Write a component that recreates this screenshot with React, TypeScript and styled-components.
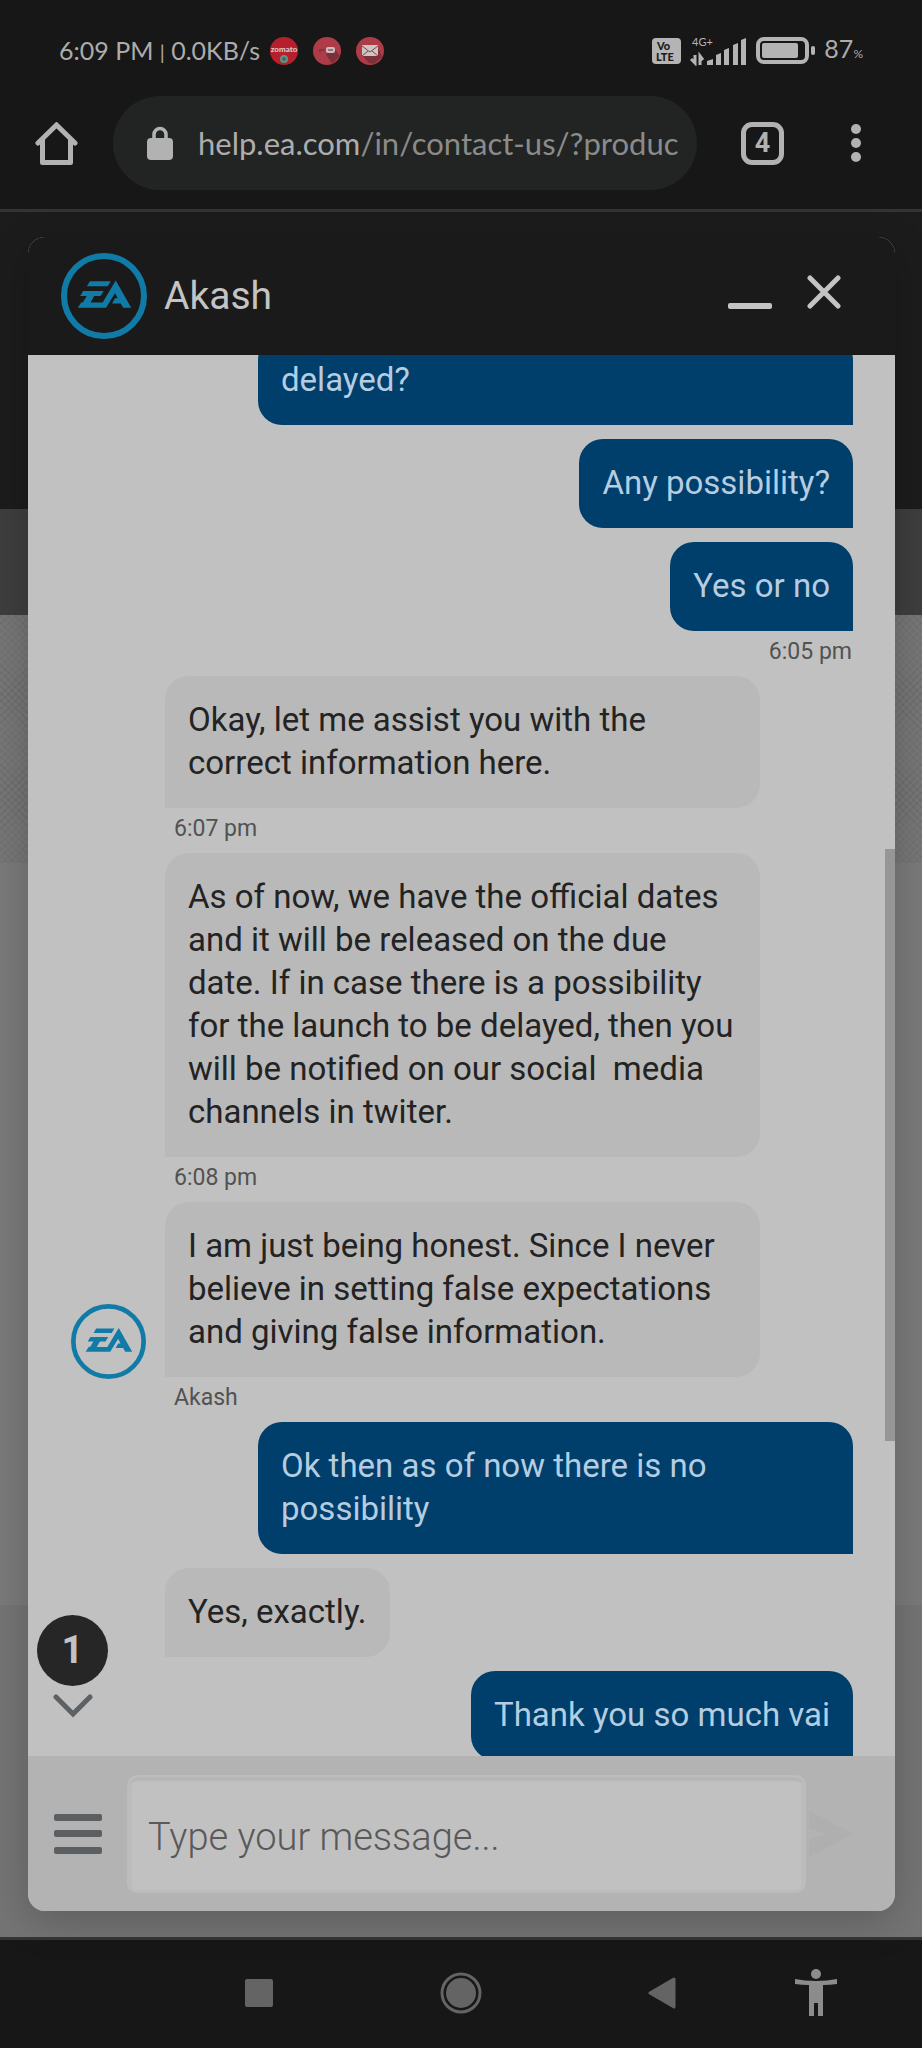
import React from 'react';
import styled, { createGlobalStyle } from 'styled-components';

const GlobalStyle = createGlobalStyle`
  *, *::before, *::after { box-sizing: border-box; }
  body { margin: 0; background: #171717; font-family: Roboto, "Liberation Sans", sans-serif; }
  button { display: flex; align-items: center; justify-content: center; margin: 0; padding: 0; border: 0; background: none; color: inherit; font: inherit; cursor: pointer; }
  svg { display: block; flex: none; }
`;

const Screen = styled.div`
  display: flex;
  flex-direction: column;
  height: 100vh;
  overflow: hidden;
`;

/* ---------- phone status bar ---------- */

const StatusBar = styled.header`
  display: flex;
  align-items: center;
  justify-content: space-between;
  height: 96px;
  padding: 5px 59px 0 59px;
  color: #acacac;
  font-family: Lato, sans-serif;
  font-size: 25px;
  line-height: 32px;
`;

const StatusGroup = styled.div<{ $gap: number }>`
  display: flex;
  align-items: center;
  gap: ${(p) => p.$gap}px;
  white-space: nowrap;
`;

const Clock = styled.span`
  width: 196px;
`;

const Separator = styled.span`
  font-size: 20px;
`;

const Percent = styled.small`
  font-size: 12px;
`;

/* ---------- browser bar ---------- */

const BrowserBar = styled.nav`
  display: flex;
  align-items: center;
  height: 116px;
  padding: 0 46px 19px 35px;
  border-bottom: 3px solid #343434;
  color: #b2b2b2;
`;

const AddressBar = styled.div`
  display: flex;
  flex: 1;
  align-items: center;
  gap: 25px;
  min-width: 0;
  height: 94px;
  margin: 0 44px 0 35px;
  padding: 0 19px 0 34px;
  border-radius: 47px;
  background: #222423;
`;

const Address = styled.span`
  flex: 1;
  overflow: hidden;
  color: #8b8b8b;
  font-family: Lato, sans-serif;
  font-size: 31px;
  line-height: 40px;
  white-space: nowrap;
`;

const Host = styled.span`
  color: #adadad;
`;

const TabCount = styled.button`
  && {
    width: 43px;
    height: 43px;
    margin-right: 52px;
    border: 5px solid #b2b2b2;
    border-radius: 11px;
    font-size: 27px;
    font-weight: 700;
    line-height: 30px;
  }
`;

const MenuButton = styled.button`
  width: 40px;
  height: 44px;
`;

/* ---------- page behind the chat ---------- */

const Page = styled.main`
  display: grid;
  flex: 1;
  grid-template: minmax(0, 1fr) / minmax(0, 1fr);
  min-height: 0;
`;

const Backdrop = styled.div`
  display: flex;
  flex-direction: column;
  grid-area: 1 / 1;
  min-height: 0;
  overflow: hidden;
`;

const Band = styled.div<{ $height?: number; $color: string; $woven?: boolean }>`
  flex: ${(p) => (p.$height ? `0 0 ${p.$height}px` : '1 0 0')};
  background-color: ${(p) => p.$color};
  ${(p) =>
    p.$woven &&
    `background-image:
      repeating-linear-gradient(45deg, rgba(0,0,0,.06) 0 1px, transparent 1px 5px),
      repeating-linear-gradient(-45deg, rgba(0,0,0,.06) 0 1px, transparent 1px 5px);`}
`;

/* ---------- chat panel ---------- */

const ChatPanel = styled.section`
  display: flex;
  flex-direction: column;
  grid-area: 1 / 1;
  min-height: 0;
  margin: 25px 27px 26px 28px;
  overflow: hidden;
  border-radius: 17px;
  background: #c1c1c1;
  box-shadow: 0 10px 40px rgba(0, 0, 0, 0.2);
`;

const ChatHeader = styled.header`
  display: flex;
  flex: none;
  align-items: center;
  height: 118px;
  padding: 0 44px 0 33px;
  background: #1a1a1a;
  color: #c4c4c4;
`;

const AgentName = styled.h1`
  flex: 1;
  margin: 0 0 0 17px;
  font-size: 39px;
  font-weight: 400;
  line-height: 48px;
`;

const HeaderButton = styled.button`
  && {
    width: 54px;
    height: 54px;
    margin: 0 0 8px 20px;
  }
`;

const ChatBody = styled.div`
  position: relative;
  flex: 1;
  min-height: 0;
  overflow: hidden;
`;

const MessageList = styled.ol`
  display: flex;
  flex-direction: column;
  gap: 14px;
  margin: -19px 0 0;
  padding: 0 42px 0 43px;
  list-style: none;
`;

const MessageRow = styled.li`
  display: grid;
  grid-template-columns: 75px minmax(0, 1fr);
  gap: 19px;
`;

const Stack = styled.div<{ $mine?: boolean }>`
  display: flex;
  flex-direction: column;
  grid-column: 2;
  align-items: ${(p) => (p.$mine ? 'flex-end' : 'flex-start')};
`;

const Bubble = styled.p<{ $mine?: boolean; $full?: boolean }>`
  width: ${(p) => (p.$full ? '100%' : 'auto')};
  max-width: calc(100% - 93px);
  margin: 0;
  padding: 22px 23px 24px;
  border-radius: ${(p) => (p.$mine ? '24px 24px 0 24px' : '24px 24px 24px 0')};
  background: ${(p) => (p.$mine ? '#003e6c' : '#b9b9b9')};
  color: ${(p) => (p.$mine ? '#b5cde0' : '#232323')};
  font-size: 33px;
  line-height: 43px;
  white-space: pre-wrap;
`;

const Meta = styled.span<{ $mine?: boolean }>`
  padding: 10px ${(p) => (p.$mine ? 1 : 0)}px 0 ${(p) => (p.$mine ? 0 : 9)}px;
  color: #525252;
  font-size: 23px;
  line-height: 21px;
`;

const AvatarSlot = styled.div`
  grid-row: 1;
  grid-column: 1;
  align-self: end;
  margin-bottom: 29px;
`;

const ScrollThumb = styled.div`
  position: absolute;
  top: calc(35% + 4px);
  right: 0;
  width: 10px;
  height: calc(42% + 3px);
  background: #969696;
`;

const JumpButton = styled.button`
  position: absolute;
  bottom: 38px;
  left: 9px;
  flex-direction: column;
  gap: 8px;
  color: #5e6163;
`;

const UnreadBadge = styled.span`
  width: 71px;
  height: 71px;
  border-radius: 50%;
  background: #262626;
  color: #c3c3c3;
  font-size: 38px;
  font-weight: 700;
  line-height: 70px;
`;

/* ---------- composer ---------- */

const Composer = styled.form`
  display: flex;
  flex: none;
  align-items: center;
  height: 155px;
  padding: 0 42px 0 26px;
  background: #b3b3b3;
  color: #5b5f62;
`;

const MessageInput = styled.input`
  flex: 1;
  min-width: 0;
  height: 118px;
  margin: 0 3px 0 25px;
  padding: 6px 18px 0;
  border: 3px solid #bcbcbc;
  border-radius: 10px;
  outline: none;
  background: #c1c1c1;
  box-shadow: inset 0 2px 3px rgba(0, 0, 0, 0.09);
  color: #232323;
  font: 300 38px/48px Roboto, sans-serif;

  &::placeholder {
    color: #595959;
    opacity: 1;
  }
`;

/* ---------- phone navigation ---------- */

const SystemNav = styled.nav`
  display: grid;
  flex: none;
  grid-template-columns: 158fr 202fr 202fr 200fr 108fr 52fr;
  align-items: center;
  height: 111px;
  padding-bottom: 2px;
  border-top: 3px solid #343434;
  color: #646464;

  button:first-child { grid-column: 2; }
  button:last-child { color: #8c8c8c; }
`;

function EaLogo({ size, stroke }: { size: number; stroke: number }) {
  return (
    <svg width={size} height={size} viewBox="0 0 256 256" role="img" aria-label="EA">
      <circle cx="128" cy="128" r={128 - stroke / 2} fill="none" stroke="#117ba8" strokeWidth={stroke} />
      <g fill="#117ba8">
        <path d="M86 84h62l-9 15H77z" />
        <path d="M66 113h61l-9 15H57z" />
        <path d="M79 124h22l-13 23h36L163 82l46 81h-24l-7-13h-26l9-15h8l-8-16-27 44H50l10-16h5z" />
      </g>
    </svg>
  );
}

function StatusBadges() {
  return (
    <>
      <svg width="28" height="28" viewBox="0 0 28 28">
        <circle cx="14" cy="14" r="14" fill="#b5202c" />
        <text x="14" y="15" textAnchor="middle" fontSize="8" fontWeight="900" fill="#dcc9c9" fontFamily="Lato">zomato</text>
        <circle cx="14" cy="22" r="4" fill="#5f9186" />
        <path d="M12 22h4M14 20v4" stroke="#37544f" />
      </svg>
      <svg width="28" height="28" viewBox="0 0 28 28">
        <circle cx="14" cy="14" r="14" fill="#ae3b48" />
        <path d="M13 17l8-6 6 8-8 8z" fill="#7c3039" />
        <rect x="13" y="10" width="9" height="6" rx="2" fill="#cdbabc" />
        <path d="M15 13h5M8 13h4M7 12v3" stroke="#642c33" strokeWidth="1" />
      </svg>
      <svg width="28" height="28" viewBox="0 0 28 28">
        <circle cx="14" cy="14" r="14" fill="#ae3b48" />
        <path d="M7 19h14l1-8 4 9-8 7-5-1z" fill="#7c3039" />
        <rect x="6" y="8" width="16" height="11" fill="#cfc3c3" />
        <path d="M6 9l8 6 8-6M6 19l6-5M22 19l-6-5" fill="none" stroke="#76474c" strokeWidth="1" />
      </svg>
    </>
  );
}

function VolteIcon() {
  return (
    <svg width="29" height="26" viewBox="0 0 29 26">
      <rect width="29" height="26" rx="4" fill="#b4b4b4" />
      <g fill="#1b1b1b" fontFamily="Lato" fontWeight="900">
        <text x="5" y="12" fontSize="11">Vo</text>
        <text x="4" y="23" fontSize="11">LTE</text>
      </g>
    </svg>
  );
}

function SignalIcon() {
  return (
    <svg width="57" height="30" viewBox="0 0 57 30" fill="#b4b4b4">
      <text x="2" y="10" fontSize="11" fontFamily="Lato">4G+</text>
      <path d="M17 29v-4l6-2v6zM26 29V19l5-2v12zM34 29V14l5-2v17zM43 29V9l5-2v22zM51 29V4l5-2v27z" />
      <path d="M5 19v8l-4-4M10 29v-9l3 4" fill="none" stroke="#b4b4b4" strokeWidth="3" />
    </svg>
  );
}

function BatteryIcon() {
  return (
    <svg width="59" height="27" viewBox="0 0 59 27">
      <rect x="2" y="2" width="49" height="23" rx="6" fill="none" stroke="#b4b4b4" strokeWidth="4" />
      <rect x="6" y="6" width="36" height="15" rx="2" fill="#b4b4b4" />
      <rect x="55" y="9" width="4" height="9" rx="2" fill="#b4b4b4" />
    </svg>
  );
}

type Message = { text: string; mine?: boolean; meta?: string; full?: boolean; avatar?: boolean };

const messages: Message[] = [
  { text: 'delayed?', mine: true, full: true },
  { text: 'Any possibility?', mine: true },
  { text: 'Yes or no', mine: true, meta: '6:05 pm' },
  { text: 'Okay, let me assist you with the correct information here.', meta: '6:07 pm' },
  {
    text: 'As of now, we have the official dates and it will be released on the due date. If in case there is a possibility for the launch to be delayed, then you will be notified on our social  media channels in twiter.',
    meta: '6:08 pm',
  },
  {
    text: 'I am just being honest. Since I never believe in setting false expectations and giving false information.',
    meta: 'Akash',
    avatar: true,
  },
  { text: 'Ok then as of now there is no possibility', mine: true },
  { text: 'Yes, exactly.' },
  { text: 'Thank you so much vai', mine: true },
];

export default function App() {
  return (
    <Screen>
      <GlobalStyle />
      <StatusBar>
        <StatusGroup $gap={15}>
          <Clock>
            6:09 PM <Separator>|</Separator> 0.0KB/s
          </Clock>
          <StatusBadges />
        </StatusGroup>
        <StatusGroup $gap={9}>
          <VolteIcon />
          <SignalIcon />
          <BatteryIcon />
          <span>
            87<Percent>%</Percent>
          </span>
        </StatusGroup>
      </StatusBar>

      <BrowserBar aria-label="Browser">
        <button aria-label="Home">
          <svg width="43" height="43" viewBox="0 0 43 43" fill="none" stroke="currentColor" strokeWidth="5" strokeLinecap="round" strokeLinejoin="round">
            <path d="M3 21L21.500 3 40 21" strokeLinejoin="miter" />
            <path d="M7.500 18v22.500h28V18" />
          </svg>
        </button>
        <AddressBar>
          <svg width="26" height="34" viewBox="0 0 26 34">
            <rect y="12" width="26" height="22" rx="4" fill="currentColor" />
            <path d="M7 13V8.500a6 6 0 0 1 12 0V13" fill="none" stroke="currentColor" strokeWidth="3.500" />
          </svg>
          <Address>
            <Host>help.ea.com</Host>/in/contact-us/?produc
          </Address>
        </AddressBar>
        <TabCount aria-label="4 open tabs">4</TabCount>
        <MenuButton aria-label="More">
          <svg width="10" height="40" viewBox="0 0 10 40" fill="currentColor">
            <circle cx="5" cy="6" r="5" />
            <circle cx="5" cy="20" r="5" />
            <circle cx="5" cy="34" r="5" />
          </svg>
        </MenuButton>
      </BrowserBar>

      <Page>
        <Backdrop>
          <Band $height={297} $color="#1c1c1c" />
          <Band $height={106} $color="#3e3e3e" />
          <Band $height={248} $color="#777777" $woven />
          <Band $height={742} $color="#7a7a7a" />
          <Band $color="#747474" />
        </Backdrop>

        <ChatPanel aria-label="Chat with Akash">
          <ChatHeader>
            <EaLogo size={86} stroke={18} />
            <AgentName>Akash</AgentName>
            <HeaderButton aria-label="Minimise">
              <svg width="44" height="34" viewBox="0 0 44 34">
                <rect y="28" width="44" height="6" rx="2" fill="currentColor" />
              </svg>
            </HeaderButton>
            <HeaderButton aria-label="Close">
              <svg width="34" height="34" viewBox="0 0 34 34" stroke="currentColor" strokeWidth="5" strokeLinecap="round">
                <path d="M3 3l28 28M31 3L3 31" />
              </svg>
            </HeaderButton>
          </ChatHeader>

          <ChatBody>
            <MessageList>
              {messages.map((m) => (
                <MessageRow key={m.text}>
                  {m.avatar && (
                    <AvatarSlot>
                      <EaLogo size={75} stroke={16} />
                    </AvatarSlot>
                  )}
                  <Stack $mine={m.mine}>
                    <Bubble $mine={m.mine} $full={m.full}>{m.text}</Bubble>
                    {m.meta && <Meta $mine={m.mine}>{m.meta}</Meta>}
                  </Stack>
                </MessageRow>
              ))}
            </MessageList>
            <ScrollThumb />
            <JumpButton aria-label="1 new message">
              <UnreadBadge>1</UnreadBadge>
              <svg width="40" height="24" viewBox="0 0 40 24" fill="none" stroke="currentColor" strokeWidth="5" strokeLinecap="round">
                <path d="M3 3l17 17L37 3" />
              </svg>
            </JumpButton>
          </ChatBody>

          <Composer onSubmit={(e) => e.preventDefault()}>
            <button type="button" aria-label="Chat menu">
              <svg width="48" height="40" viewBox="0 0 48 40" fill="currentColor">
                <rect width="48" height="7" rx="2" />
                <rect y="16" width="48" height="7" rx="2" />
                <rect y="33" width="48" height="7" rx="2" />
              </svg>
            </button>
            <MessageInput aria-label="Message" placeholder="Type your message..." />
            <button type="submit" aria-label="Send">
              <svg width="44" height="46" viewBox="0 0 44 46" fill="#afafaf">
                <path d="M0 0l44 23L0 46V29l18-6L0 17z" />
              </svg>
            </button>
          </Composer>
        </ChatPanel>
      </Page>

      <SystemNav aria-label="System">
        <button aria-label="Recent apps">
          <svg width="28" height="28" viewBox="0 0 28 28">
            <rect width="28" height="28" rx="2" fill="currentColor" />
          </svg>
        </button>
        <button aria-label="Home screen">
          <svg width="42" height="42" viewBox="0 0 42 42">
            <circle cx="21" cy="21" r="19" fill="none" stroke="currentColor" strokeWidth="3" />
            <circle cx="21" cy="21" r="15" fill="currentColor" />
          </svg>
        </button>
        <button aria-label="Back">
          <svg width="28" height="32" viewBox="0 0 28 32">
            <path d="M2 16L26 2v28z" fill="currentColor" stroke="currentColor" strokeWidth="3" strokeLinejoin="round" />
          </svg>
        </button>
        <button aria-label="Accessibility">
          <svg width="42" height="48" viewBox="0 0 42 48" fill="currentColor">
            <circle cx="21" cy="5" r="5" />
            <path d="M0 10q10 2 21 2t21-2v5q-7 1-14 1v31h-5V34h-4v13h-5V16q-7 0-14-1z" />
          </svg>
        </button>
      </SystemNav>
    </Screen>
  );
}
